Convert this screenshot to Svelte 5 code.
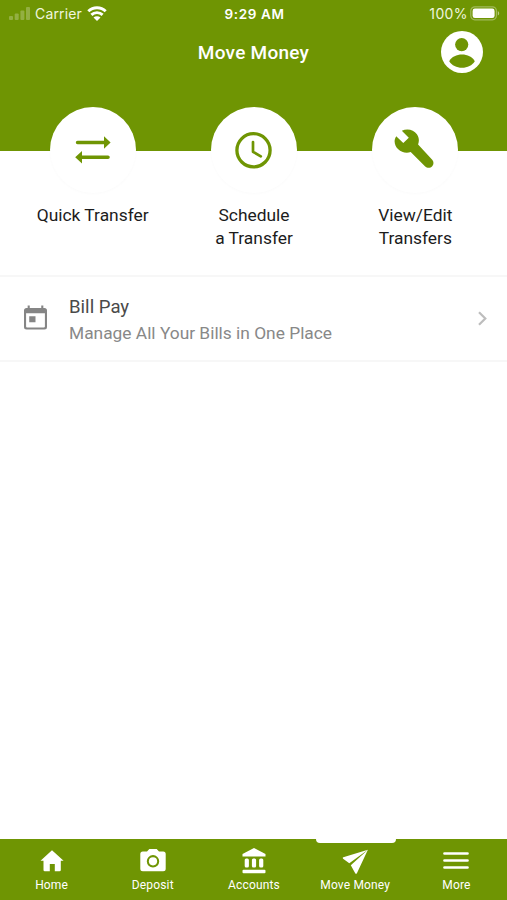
<script>
  const actions = [
    { icon: 'transfer', lines: ['Quick Transfer'] },
    { icon: 'clock', lines: ['Schedule', 'a Transfer'] },
    { icon: 'wrench', lines: ['View/Edit', 'Transfers'] }
  ];

  const tabs = [
    { icon: 'home', label: 'Home' },
    { icon: 'camera', label: 'Deposit' },
    { icon: 'bank', label: 'Accounts' },
    { icon: 'send', label: 'Move Money' },
    { icon: 'menu', label: 'More' }
  ];

  let active = $state('Move Money');
</script>

<div class="screen">
  <header class="header">
    <div class="status">
      <div class="status-left">
        <svg class="signal" width="21" height="13" viewBox="0 0 21 13">
          <rect x="0" y="9" width="4" height="4" rx="1" />
          <rect x="5.7" y="6.5" width="4" height="6.5" rx="1" />
          <rect x="11.4" y="3.5" width="4" height="9.5" rx="1" />
          <rect x="17" y="0" width="4" height="13" rx="1" />
        </svg>
        <span class="carrier">Carrier</span>
        <svg class="wifi" width="20" height="15" viewBox="0 0 20 15">
          <path d="M1.3 5.3a12.4 12.4 0 0 1 17.4 0M4.4 8.9a8 8 0 0 1 11.2 0" fill="none" stroke="#fff" stroke-width="2.9" />
          <path d="M10 15 6.5 11.6a4.9 4.9 0 0 1 7 0z" fill="#fff" />
        </svg>
      </div>
      <div class="time">9:29 AM</div>
      <div class="status-right">
        <span class="percent">100%</span>
        <svg width="30" height="15" viewBox="0 0 30 15">
          <rect x=".8" y=".8" width="25.6" height="13" rx="4" fill="none" stroke="#fff" stroke-opacity=".35" stroke-width="1.2" />
          <rect x="2.6" y="2.6" width="22" height="9.4" rx="2.3" fill="#fff" />
          <path d="M27.8 5v4.6c1.9-.8 1.9-3.8 0-4.6z" fill="#fff" fill-opacity=".5" />
        </svg>
      </div>
    </div>
    <div class="title-bar">
      <h1>Move Money</h1>
      <button class="profile" aria-label="Profile">
        <svg width="42" height="42" viewBox="0 0 42 42">
          <circle cx="21" cy="21" r="21" fill="#fff" />
          <circle cx="20.7" cy="13.6" r="6.6" fill="#6f9503" />
          <path d="M8.2 30.2c2.6-4.5 7.4-6.7 12.8-6.7s10.2 2.2 12.8 6.7c-2.6 4.3-7.4 6.5-12.8 6.5s-10.2-2.2-12.8-6.5z" fill="#6f9503" />
        </svg>
      </button>
    </div>
  </header>

  <section class="actions">
    {#each actions as action}
      <button class="action">
        <span class="circle">
          {#if action.icon === 'transfer'}
            <svg width="36" height="28" viewBox="0 0 36 28">
              <path d="M2.6 6.5H29M33 21.3H7" fill="none" stroke="#6f9503" stroke-width="3.6" stroke-linecap="round" />
              <path d="m29 .2 6.6 6.3-6.6 6.3zM7 15 .2 21.3 7 27.6z" fill="#6f9503" />
            </svg>
          {:else if action.icon === 'clock'}
            <svg width="37" height="37" viewBox="0 0 37 37" fill="none" stroke="#6f9503">
              <circle cx="18.5" cy="18.3" r="16.6" stroke-width="3.3" />
              <path d="M18 10v9.8l7.8 4.5" stroke-width="2.7" stroke-linecap="round" stroke-linejoin="round" />
            </svg>
          {:else}
            <svg class="wrench" width="40" height="40" viewBox="0 0 40 40">
              <path d="M2.2 7.2 9.3 14 14.8 8.7 7.8 1.8C13.2-.9 19.6.6 22.9 5.2c2.2 3.2 2.5 6.7 1.200 10.300L38.200 30.800c1.700 1.900 1.700 4.600 0 6.500-1.900 2-5.100 2-7 .1L16.700 23.100C8.800 25.600.6 20 .6 12.300c0-1.800.7-3.600 1.600-5.100z" fill="#6f9503" />
            </svg>
          {/if}
        </span>
        <span class="action-label">
          {#each action.lines as line}
            <span>{line}</span>
          {/each}
        </span>
      </button>
    {/each}
  </section>

  <main class="list">
    <button class="row">
      <svg class="calendar" width="23" height="25" viewBox="0 0 22 25" preserveAspectRatio="none">
        <path fill-rule="evenodd" d="M3.5.5H5.5V3h11V.5h2V3h1a2.500 2.500 0 0 1 2.500 2.500v16.500a2.500 2.500 0 0 1-2.500 2.500h-17A2.500 2.500 0 0 1 0 22V5.500A2.500 2.500 0 0 1 2.500 3h1zM2 8.300V21.500q0 1 1 1h16q1 0 1-1V8.300zM5 11.200h6v6H5z" fill="#858585" />
      </svg>
      <span class="row-text">
        <span class="row-title">Bill Pay</span>
        <span class="row-subtitle">Manage All Your Bills in One Place</span>
      </span>
      <svg class="chevron" width="9" height="15" viewBox="0 0 9 15">
        <path d="m1 1.2 6.300 6.300L1 13.800" fill="none" stroke="#bdbdbd" stroke-width="2.2" />
      </svg>
    </button>
  </main>

  <nav class="tabs">
    {#each tabs as tab}
      <button class="tab" class:active={active === tab.label} onclick={() => (active = tab.label)}>
        <svg width="28" height="26" viewBox="0 0 28 26" fill="#fff">
          {#if tab.icon === 'home'}
            <path d="M14 2.300 25.600 12.800H22.800V22q0 1.300-1.300 1.300H16.800V16h-5v7.300H6.800Q5.500 23.300 5.500 22v-9.200H2.500z" />
          {:else if tab.icon === 'camera'}
            <path fill-rule="evenodd" d="M10.300 1h7.400L20 3.400h4.200a2.500 2.500 0 0 1 2.500 2.500v14.800a2.500 2.500 0 0 1-2.500 2.500H3.800a2.500 2.500 0 0 1-2.500-2.500V5.900a2.500 2.500 0 0 1 2.500-2.500H8zM14 7.100a6.200 6.200 0 1 0 0 12.400 6.200 6.200 0 0 0 0-12.400z" />
            <circle cx="14" cy="13.3" r="4.1" />
          {:else if tab.icon === 'bank'}
            <path d="M14 0 25.500 6v2.600h-23V6z" />
            <rect x="4.7" y="10.5" width="4.2" height="9" rx="1.5" />
            <rect x="11.9" y="10.5" width="4.2" height="9" rx="1.5" />
            <rect x="19.1" y="10.5" width="4.2" height="9" rx="1.5" />
            <rect x="2.5" y="21.7" width="23" height="3.6" rx="1" />
          {:else if tab.icon === 'send'}
            <path d="M26.900 1.800 2.300 9.300q-1 .6-.2 1.400l6.200 4.500zM26.900 1.800 9.800 17.300l4.400 8q.9 1 1.700 0z" />
          {:else}
            <path d="M2.500 5.500h23M2.500 12.500h23M2.500 19.500h23" stroke="#fff" stroke-width="2.7" stroke-linecap="round" />
          {/if}
        </svg>
        <span class="tab-label">{tab.label}</span>
      </button>
    {/each}
  </nav>
</div>

<style>
  :global(body) {
    margin: 0;
  }

  .screen {
    display: flex;
    flex-direction: column;
    width: 507px;
    height: 900px;
    overflow: hidden;
    background: #fff;
    font-family: Roboto, sans-serif;
  }

  button {
    margin: 0;
    padding: 0;
    border: 0;
    background: none;
    font: inherit;
    color: inherit;
  }

  svg {
    display: block;
    flex-shrink: 0;
  }

  .header {
    flex-shrink: 0;
    height: 151px;
    background: #6f9503;
    color: #fff;
  }

  .status {
    display: grid;
    grid-template-columns: 1fr auto 1fr;
    align-items: center;
    box-sizing: border-box;
    height: 27px;
    padding: 0 7px 0 9px;
    font-family: Inter, sans-serif;
    font-size: 14px;
  }

  .status-left,
  .status-right {
    display: flex;
    align-items: center;
  }

  .status-right {
    justify-content: flex-end;
    gap: 2px;
  }

  .signal {
    fill: #fff;
    fill-opacity: 0.25;
  }

  .carrier {
    margin-left: 5px;
    letter-spacing: 0.15px;
    color: #f0f5df;
  }

  .wifi {
    margin-left: 5px;
  }

  .time {
    font-size: 13.5px;
    font-weight: 600;
    letter-spacing: 0.65px;
  }

  .percent {
    letter-spacing: 0.4px;
    color: #f0f5df;
  }

  .title-bar {
    display: grid;
    grid-template-columns: 1fr auto 1fr;
    align-items: center;
    height: 50px;
    padding: 0 24px;
  }

  h1 {
    grid-column: 2;
    margin: 2px 0 0;
    font-size: 19px;
    font-weight: 500;
    line-height: 24px;
    letter-spacing: 0.25px;
  }

  .profile {
    justify-self: end;
  }

  .actions {
    display: grid;
    grid-template-columns: repeat(3, 1fr);
    flex-shrink: 0;
    box-sizing: border-box;
    height: 168px;
    margin-top: -44px;
    padding: 0 11px 0 12px;
  }

  .action {
    display: flex;
    flex-direction: column;
    align-items: center;
    color: #1c1c1c;
  }

  .circle {
    display: flex;
    align-items: center;
    justify-content: center;
    width: 86px;
    height: 86px;
    border-radius: 50%;
    background: #fff;
    box-shadow: 0 1px 3px rgba(0, 0, 0, 0.02);
  }

  .wrench {
    margin-right: 2px;
    margin-bottom: 2px;
  }

  .action-label {
    display: flex;
    flex-direction: column;
    margin-top: 11px;
    font-size: 17.4px;
    line-height: 22.5px;
  }

  .list {
    flex: 1;
  }

  .row {
    display: flex;
    align-items: center;
    box-sizing: border-box;
    width: 100%;
    height: 87px;
    padding: 0 20px 0 24px;
    border-top: 2px solid #f7f7f7;
    border-bottom: 2px solid #f7f7f7;
    text-align: left;
  }

  .calendar {
    margin-bottom: 2px;
  }

  .row-text {
    display: flex;
    flex: 1;
    flex-direction: column;
    margin-left: 22px;
    padding-top: 3px;
    line-height: 26px;
  }

  .row-title {
    font-size: 18.6px;
    color: #4a4a4a;
  }

  .row-subtitle {
    font-size: 17.35px;
    color: #888;
  }

  .tabs {
    display: grid;
    grid-template-columns: repeat(5, 1fr);
    flex-shrink: 0;
    box-sizing: border-box;
    height: 61px;
    padding-left: 1px;
    background: #6f9503;
    color: #fff;
  }

  .tab {
    position: relative;
    display: flex;
    flex-direction: column;
    align-items: center;
    padding-top: 9px;
  }

  .tab.active::before {
    content: '';
    position: absolute;
    top: -1px;
    left: 11px;
    width: 80px;
    height: 5px;
    border-radius: 0 0 4px 4px;
    background: #fff;
  }

  .tab-label {
    margin-top: 3px;
    font-size: 12px;
    line-height: 16px;
    letter-spacing: 0.15px;
  }
</style>
